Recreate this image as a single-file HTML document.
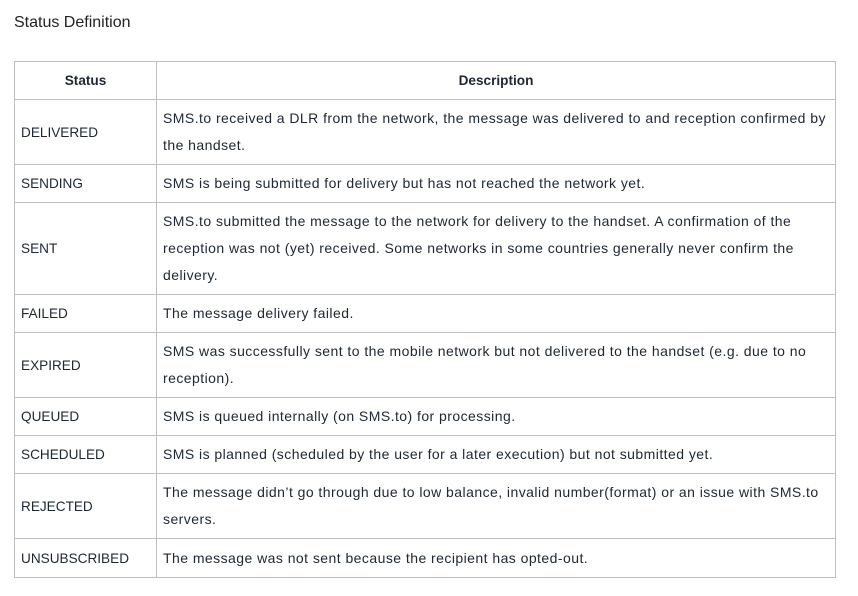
<!DOCTYPE html>
<html><head><meta charset="utf-8"><style>
body{margin:0;background:#fff;font-family:"Liberation Sans",sans-serif;color:#1d2733;}
h3{position:absolute;left:14px;top:14px;margin:0;font-weight:normal;font-size:16px;color:#222;}
table{position:absolute;left:14px;top:61px;border-collapse:collapse;width:822px;font-size:13.6px;}
td,th{border:1px solid #bdbdbd;padding:0 6px;line-height:27px;white-space:nowrap;vertical-align:middle;}
td+td{font-size:14px;letter-spacing:0.45px;}
th{font-weight:bold;text-align:center;height:37px;}
td:first-child,th:first-child{width:129px;}
</style></head><body>
<h3>Status Definition</h3>
<table>
<tr><th>Status</th><th>Description</th></tr>
<tr style="height:65px"><td>DELIVERED</td><td>SMS.to received a DLR from the network, the message was delivered to and reception confirmed by<br>the handset.</td></tr>
<tr style="height:38px"><td>SENDING</td><td>SMS is being submitted for delivery but has not reached the network yet.</td></tr>
<tr style="height:92px"><td>SENT</td><td>SMS.to submitted the message to the network for delivery to the handset. A confirmation of the<br>reception was not (yet) received. Some networks in some countries generally never confirm the<br>delivery.</td></tr>
<tr style="height:38px"><td>FAILED</td><td>The message delivery failed.</td></tr>
<tr style="height:65px"><td>EXPIRED</td><td>SMS was successfully sent to the mobile network but not delivered to the handset (e.g. due to no<br>reception).</td></tr>
<tr style="height:38px"><td>QUEUED</td><td>SMS is queued internally (on SMS.to) for processing.</td></tr>
<tr style="height:38px"><td>SCHEDULED</td><td>SMS is planned (scheduled by the user for a later execution) but not submitted yet.</td></tr>
<tr style="height:65px"><td>REJECTED</td><td>The message didn’t go through due to low balance, invalid number(format) or an issue with SMS.to<br>servers.</td></tr>
<tr style="height:39px"><td>UNSUBSCRIBED</td><td>The message was not sent because the recipient has opted-out.</td></tr>
</table>
</body></html>
